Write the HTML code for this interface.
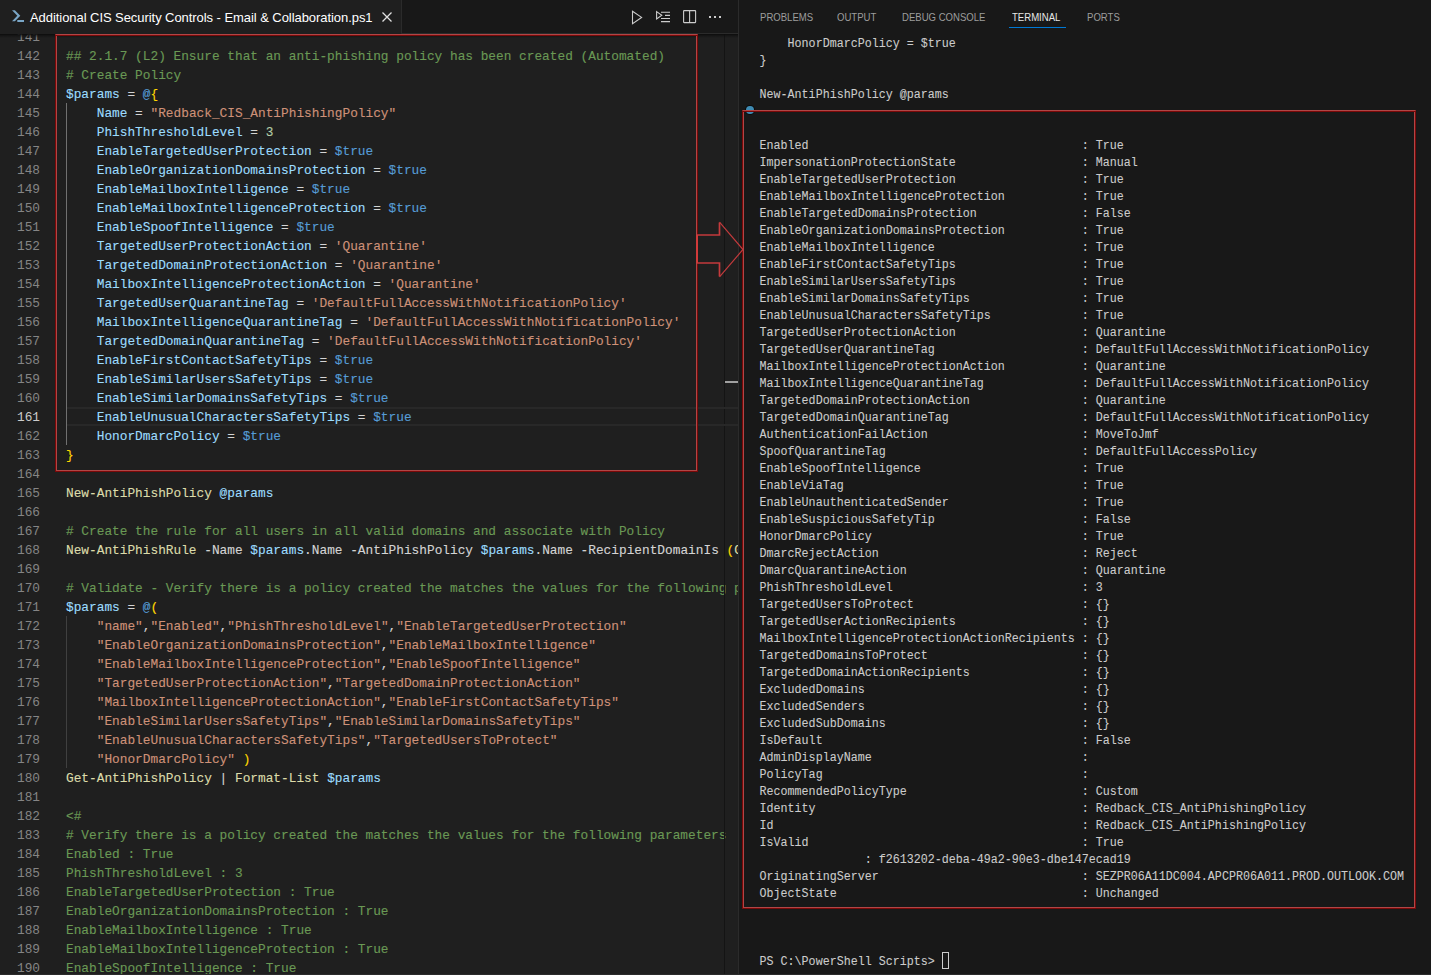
<!DOCTYPE html>
<html><head><meta charset="utf-8">
<style>
*{margin:0;padding:0;box-sizing:border-box}
html,body{width:1431px;height:975px;overflow:hidden;background:#1f1f1f}
body{position:relative;font-family:"Liberation Sans",sans-serif}
.abs{position:absolute}
#editor{position:absolute;left:0;top:0;width:738px;height:975px;background:#1f1f1f;overflow:hidden}
#tabs{position:absolute;left:0;top:0;width:739px;height:34px;background:#181818;z-index:5}
#tab{position:absolute;left:0;top:0;width:402px;height:34px;background:#1f1f1f;border-right:1px solid #2b2b2b}
#tabtitle{position:absolute;left:30px;top:9.7px;font-size:13px;letter-spacing:-0.06px;color:#ffffff;white-space:nowrap;line-height:16px}
#code{position:absolute;left:0;top:0;width:739px;height:975px;overflow:hidden}
.ln{position:absolute;left:0;width:40px;text-align:right;height:19px;line-height:19px;font-family:"Liberation Mono",monospace;font-size:12.800px;color:#858585}
.ln.act{color:#cccccc}
.cl{-webkit-text-stroke:0.12px currentColor;position:absolute;left:66.000px;height:19px;line-height:19px;font-family:"Liberation Mono",monospace;font-size:12.800px;white-space:pre;color:#d4d4d4}
.cm{color:#6a9955}.var{color:#9cdcfe}.op{color:#d4d4d4}.kw{color:#569cd6}.br{color:#ffd700}
.st{color:#ce9178}.num{color:#b5cea8}.fn{color:#dcdcaa}
#panel{position:absolute;left:738px;top:0;width:693px;height:975px;background:#181818;border-left:1px solid #2b2b2b}
.ptab{position:absolute;top:10px;font-size:11px;line-height:14px;color:#9d9d9d;white-space:nowrap;transform-origin:0 0;transform:scaleX(0.87)}
.tl{-webkit-text-stroke:0.08px currentColor;position:absolute;left:759.600px;height:17px;line-height:17px;font-family:"Liberation Mono",monospace;font-size:11.683px;white-space:pre;color:#cccccc;transform:scaleY(1.12);transform-origin:0 11.6px}
.redbox{position:absolute;border:1px solid #7a0808;border-top-color:#b04646;box-shadow:inset 0 1px 0 0 #7a0808,inset 1px 0 0 0 #b04646,inset -1px 0 0 0 #b04646,inset 0 -1px 0 0 #b04646}
</style></head><body>
<div id="editor">
  <div id="code">
<div class="ln" style="top:27.5px">141</div>
<div class="cl" style="top:27.5px"></div>
<div class="ln" style="top:46.5px">142</div>
<div class="cl" style="top:46.5px"><span class="cm">## 2.1.7 (L2) Ensure that an anti-phishing policy has been created (Automated)</span></div>
<div class="ln" style="top:65.5px">143</div>
<div class="cl" style="top:65.5px"><span class="cm"># Create Policy</span></div>
<div class="ln" style="top:84.5px">144</div>
<div class="cl" style="top:84.5px"><span class="var">$params</span><span class="op"> = </span><span class="kw">@</span><span class="br">{</span></div>
<div class="ln" style="top:103.5px">145</div>
<div class="cl" style="top:103.5px"><span class="op">    </span><span class="var">Name</span><span class="op"> = </span><span class="st">&quot;Redback_CIS_AntiPhishingPolicy&quot;</span></div>
<div class="ln" style="top:122.5px">146</div>
<div class="cl" style="top:122.5px"><span class="op">    </span><span class="var">PhishThresholdLevel</span><span class="op"> = </span><span class="num">3</span></div>
<div class="ln" style="top:141.5px">147</div>
<div class="cl" style="top:141.5px"><span class="op">    </span><span class="var">EnableTargetedUserProtection</span><span class="op"> = </span><span class="kw">$true</span></div>
<div class="ln" style="top:160.5px">148</div>
<div class="cl" style="top:160.5px"><span class="op">    </span><span class="var">EnableOrganizationDomainsProtection</span><span class="op"> = </span><span class="kw">$true</span></div>
<div class="ln" style="top:179.5px">149</div>
<div class="cl" style="top:179.5px"><span class="op">    </span><span class="var">EnableMailboxIntelligence</span><span class="op"> = </span><span class="kw">$true</span></div>
<div class="ln" style="top:198.5px">150</div>
<div class="cl" style="top:198.5px"><span class="op">    </span><span class="var">EnableMailboxIntelligenceProtection</span><span class="op"> = </span><span class="kw">$true</span></div>
<div class="ln" style="top:217.5px">151</div>
<div class="cl" style="top:217.5px"><span class="op">    </span><span class="var">EnableSpoofIntelligence</span><span class="op"> = </span><span class="kw">$true</span></div>
<div class="ln" style="top:236.5px">152</div>
<div class="cl" style="top:236.5px"><span class="op">    </span><span class="var">TargetedUserProtectionAction</span><span class="op"> = </span><span class="st">&#x27;Quarantine&#x27;</span></div>
<div class="ln" style="top:255.5px">153</div>
<div class="cl" style="top:255.5px"><span class="op">    </span><span class="var">TargetedDomainProtectionAction</span><span class="op"> = </span><span class="st">&#x27;Quarantine&#x27;</span></div>
<div class="ln" style="top:274.5px">154</div>
<div class="cl" style="top:274.5px"><span class="op">    </span><span class="var">MailboxIntelligenceProtectionAction</span><span class="op"> = </span><span class="st">&#x27;Quarantine&#x27;</span></div>
<div class="ln" style="top:293.5px">155</div>
<div class="cl" style="top:293.5px"><span class="op">    </span><span class="var">TargetedUserQuarantineTag</span><span class="op"> = </span><span class="st">&#x27;DefaultFullAccessWithNotificationPolicy&#x27;</span></div>
<div class="ln" style="top:312.5px">156</div>
<div class="cl" style="top:312.5px"><span class="op">    </span><span class="var">MailboxIntelligenceQuarantineTag</span><span class="op"> = </span><span class="st">&#x27;DefaultFullAccessWithNotificationPolicy&#x27;</span></div>
<div class="ln" style="top:331.5px">157</div>
<div class="cl" style="top:331.5px"><span class="op">    </span><span class="var">TargetedDomainQuarantineTag</span><span class="op"> = </span><span class="st">&#x27;DefaultFullAccessWithNotificationPolicy&#x27;</span></div>
<div class="ln" style="top:350.5px">158</div>
<div class="cl" style="top:350.5px"><span class="op">    </span><span class="var">EnableFirstContactSafetyTips</span><span class="op"> = </span><span class="kw">$true</span></div>
<div class="ln" style="top:369.5px">159</div>
<div class="cl" style="top:369.5px"><span class="op">    </span><span class="var">EnableSimilarUsersSafetyTips</span><span class="op"> = </span><span class="kw">$true</span></div>
<div class="ln" style="top:388.5px">160</div>
<div class="cl" style="top:388.5px"><span class="op">    </span><span class="var">EnableSimilarDomainsSafetyTips</span><span class="op"> = </span><span class="kw">$true</span></div>
<div class="ln act" style="top:407.5px">161</div>
<div class="cl" style="top:407.5px"><span class="op">    </span><span class="var">EnableUnusualCharactersSafetyTips</span><span class="op"> = </span><span class="kw">$true</span></div>
<div class="ln" style="top:426.5px">162</div>
<div class="cl" style="top:426.5px"><span class="op">    </span><span class="var">HonorDmarcPolicy</span><span class="op"> = </span><span class="kw">$true</span></div>
<div class="ln" style="top:445.5px">163</div>
<div class="cl" style="top:445.5px"><span class="br">}</span></div>
<div class="ln" style="top:464.5px">164</div>
<div class="cl" style="top:464.5px"></div>
<div class="ln" style="top:483.5px">165</div>
<div class="cl" style="top:483.5px"><span class="fn">New-AntiPhishPolicy</span><span class="op"> </span><span class="var">@params</span></div>
<div class="ln" style="top:502.5px">166</div>
<div class="cl" style="top:502.5px"></div>
<div class="ln" style="top:521.5px">167</div>
<div class="cl" style="top:521.5px"><span class="cm"># Create the rule for all users in all valid domains and associate with Policy</span></div>
<div class="ln" style="top:540.5px">168</div>
<div class="cl" style="top:540.5px"><span class="fn">New-AntiPhishRule</span><span class="op"> -Name </span><span class="var">$params</span><span class="op">.Name -AntiPhishPolicy </span><span class="var">$params</span><span class="op">.Name -RecipientDomainIs </span><span class="br">(</span><span class="fn">Get-AcceptedDomain</span><span class="br">)</span><span class="op">.Name</span></div>
<div class="ln" style="top:559.5px">169</div>
<div class="cl" style="top:559.5px"></div>
<div class="ln" style="top:578.5px">170</div>
<div class="cl" style="top:578.5px"><span class="cm"># Validate - Verify there is a policy created the matches the values for the following parameters</span></div>
<div class="ln" style="top:597.5px">171</div>
<div class="cl" style="top:597.5px"><span class="var">$params</span><span class="op"> = </span><span class="kw">@</span><span class="br">(</span></div>
<div class="ln" style="top:616.5px">172</div>
<div class="cl" style="top:616.5px"><span class="op">    </span><span class="st">&quot;name&quot;</span><span class="op">,</span><span class="st">&quot;Enabled&quot;</span><span class="op">,</span><span class="st">&quot;PhishThresholdLevel&quot;</span><span class="op">,</span><span class="st">&quot;EnableTargetedUserProtection&quot;</span></div>
<div class="ln" style="top:635.5px">173</div>
<div class="cl" style="top:635.5px"><span class="op">    </span><span class="st">&quot;EnableOrganizationDomainsProtection&quot;</span><span class="op">,</span><span class="st">&quot;EnableMailboxIntelligence&quot;</span></div>
<div class="ln" style="top:654.5px">174</div>
<div class="cl" style="top:654.5px"><span class="op">    </span><span class="st">&quot;EnableMailboxIntelligenceProtection&quot;</span><span class="op">,</span><span class="st">&quot;EnableSpoofIntelligence&quot;</span></div>
<div class="ln" style="top:673.5px">175</div>
<div class="cl" style="top:673.5px"><span class="op">    </span><span class="st">&quot;TargetedUserProtectionAction&quot;</span><span class="op">,</span><span class="st">&quot;TargetedDomainProtectionAction&quot;</span></div>
<div class="ln" style="top:692.5px">176</div>
<div class="cl" style="top:692.5px"><span class="op">    </span><span class="st">&quot;MailboxIntelligenceProtectionAction&quot;</span><span class="op">,</span><span class="st">&quot;EnableFirstContactSafetyTips&quot;</span></div>
<div class="ln" style="top:711.5px">177</div>
<div class="cl" style="top:711.5px"><span class="op">    </span><span class="st">&quot;EnableSimilarUsersSafetyTips&quot;</span><span class="op">,</span><span class="st">&quot;EnableSimilarDomainsSafetyTips&quot;</span></div>
<div class="ln" style="top:730.5px">178</div>
<div class="cl" style="top:730.5px"><span class="op">    </span><span class="st">&quot;EnableUnusualCharactersSafetyTips&quot;</span><span class="op">,</span><span class="st">&quot;TargetedUsersToProtect&quot;</span></div>
<div class="ln" style="top:749.5px">179</div>
<div class="cl" style="top:749.5px"><span class="op">    </span><span class="st">&quot;HonorDmarcPolicy&quot;</span><span class="op"> </span><span class="br">)</span></div>
<div class="ln" style="top:768.5px">180</div>
<div class="cl" style="top:768.5px"><span class="fn">Get-AntiPhishPolicy</span><span class="op"> | </span><span class="fn">Format-List</span><span class="op"> </span><span class="var">$params</span></div>
<div class="ln" style="top:787.5px">181</div>
<div class="cl" style="top:787.5px"></div>
<div class="ln" style="top:806.5px">182</div>
<div class="cl" style="top:806.5px"><span class="cm">&lt;#</span></div>
<div class="ln" style="top:825.5px">183</div>
<div class="cl" style="top:825.5px"><span class="cm"># Verify there is a policy created the matches the values for the following parameters</span></div>
<div class="ln" style="top:844.5px">184</div>
<div class="cl" style="top:844.5px"><span class="cm">Enabled : True</span></div>
<div class="ln" style="top:863.5px">185</div>
<div class="cl" style="top:863.5px"><span class="cm">PhishThresholdLevel : 3</span></div>
<div class="ln" style="top:882.5px">186</div>
<div class="cl" style="top:882.5px"><span class="cm">EnableTargetedUserProtection : True</span></div>
<div class="ln" style="top:901.5px">187</div>
<div class="cl" style="top:901.5px"><span class="cm">EnableOrganizationDomainsProtection : True</span></div>
<div class="ln" style="top:920.5px">188</div>
<div class="cl" style="top:920.5px"><span class="cm">EnableMailboxIntelligence : True</span></div>
<div class="ln" style="top:939.5px">189</div>
<div class="cl" style="top:939.5px"><span class="cm">EnableMailboxIntelligenceProtection : True</span></div>
<div class="ln" style="top:958.5px">190</div>
<div class="cl" style="top:958.5px"><span class="cm">EnableSpoofIntelligence : True</span></div>
  </div>
  <div id="tabs">
    <div class="abs" style="left:402px;top:33px;width:336px;height:1px;background:#2b2b2b"></div>
    <div id="tab">
      <svg class="abs" style="left:0;top:0" width="30" height="30" viewBox="0 0 30 30"><path d="M12 10.2 L14.9 10.2 L20.3 15.8 L14.9 21.2 L12 21.2 L17.3 15.8 Z" fill="#7aa6c6"/><rect x="17.3" y="20" width="6.7" height="2" fill="#7aa6c6"/></svg>
      <div id="tabtitle">Additional CIS Security Controls - Email &amp; Collaboration.ps1</div>
      <svg class="abs" style="left:382px;top:12px" width="10" height="10" viewBox="0 0 10 10"><path d="M0.5 0.5 L9.5 9.5 M9.5 0.5 L0.5 9.5" stroke="#e0e0e0" stroke-width="1.3"/></svg>
    </div>
  </div>
</div>
<div id="panel">
  <div class="ptab" style="left:21px">PROBLEMS</div>
  <div class="ptab" style="left:98px">OUTPUT</div>
  <div class="ptab" style="left:163px">DEBUG CONSOLE</div>
  <div class="ptab" style="left:273px;color:#e7e7e7">TERMINAL</div>
  <div class="abs" style="left:270px;top:27px;width:57px;height:1px;background:#0078d4"></div>
  <div class="ptab" style="left:348px">PORTS</div>
</div>
<div id="term">
<div class="tl" style="top:36.1px">    HonorDmarcPolicy = $true</div>
<div class="tl" style="top:53.1px">}</div>
<div class="tl" style="top:70.1px"></div>
<div class="tl" style="top:87.1px">New-AntiPhishPolicy @params</div>
<div class="tl" style="top:104.1px"></div>
<div class="tl" style="top:121.1px"></div>
<div class="tl" style="top:138.1px">Enabled                                       : True</div>
<div class="tl" style="top:155.1px">ImpersonationProtectionState                  : Manual</div>
<div class="tl" style="top:172.1px">EnableTargetedUserProtection                  : True</div>
<div class="tl" style="top:189.1px">EnableMailboxIntelligenceProtection           : True</div>
<div class="tl" style="top:206.1px">EnableTargetedDomainsProtection               : False</div>
<div class="tl" style="top:223.1px">EnableOrganizationDomainsProtection           : True</div>
<div class="tl" style="top:240.1px">EnableMailboxIntelligence                     : True</div>
<div class="tl" style="top:257.1px">EnableFirstContactSafetyTips                  : True</div>
<div class="tl" style="top:274.1px">EnableSimilarUsersSafetyTips                  : True</div>
<div class="tl" style="top:291.1px">EnableSimilarDomainsSafetyTips                : True</div>
<div class="tl" style="top:308.1px">EnableUnusualCharactersSafetyTips             : True</div>
<div class="tl" style="top:325.1px">TargetedUserProtectionAction                  : Quarantine</div>
<div class="tl" style="top:342.1px">TargetedUserQuarantineTag                     : DefaultFullAccessWithNotificationPolicy</div>
<div class="tl" style="top:359.1px">MailboxIntelligenceProtectionAction           : Quarantine</div>
<div class="tl" style="top:376.1px">MailboxIntelligenceQuarantineTag              : DefaultFullAccessWithNotificationPolicy</div>
<div class="tl" style="top:393.1px">TargetedDomainProtectionAction                : Quarantine</div>
<div class="tl" style="top:410.1px">TargetedDomainQuarantineTag                   : DefaultFullAccessWithNotificationPolicy</div>
<div class="tl" style="top:427.1px">AuthenticationFailAction                      : MoveToJmf</div>
<div class="tl" style="top:444.1px">SpoofQuarantineTag                            : DefaultFullAccessPolicy</div>
<div class="tl" style="top:461.1px">EnableSpoofIntelligence                       : True</div>
<div class="tl" style="top:478.1px">EnableViaTag                                  : True</div>
<div class="tl" style="top:495.1px">EnableUnauthenticatedSender                   : True</div>
<div class="tl" style="top:512.1px">EnableSuspiciousSafetyTip                     : False</div>
<div class="tl" style="top:529.1px">HonorDmarcPolicy                              : True</div>
<div class="tl" style="top:546.1px">DmarcRejectAction                             : Reject</div>
<div class="tl" style="top:563.1px">DmarcQuarantineAction                         : Quarantine</div>
<div class="tl" style="top:580.1px">PhishThresholdLevel                           : 3</div>
<div class="tl" style="top:597.1px">TargetedUsersToProtect                        : {}</div>
<div class="tl" style="top:614.1px">TargetedUserActionRecipients                  : {}</div>
<div class="tl" style="top:631.1px">MailboxIntelligenceProtectionActionRecipients : {}</div>
<div class="tl" style="top:648.1px">TargetedDomainsToProtect                      : {}</div>
<div class="tl" style="top:665.1px">TargetedDomainActionRecipients                : {}</div>
<div class="tl" style="top:682.1px">ExcludedDomains                               : {}</div>
<div class="tl" style="top:699.1px">ExcludedSenders                               : {}</div>
<div class="tl" style="top:716.1px">ExcludedSubDomains                            : {}</div>
<div class="tl" style="top:733.1px">IsDefault                                     : False</div>
<div class="tl" style="top:750.1px">AdminDisplayName                              : </div>
<div class="tl" style="top:767.1px">PolicyTag                                     : </div>
<div class="tl" style="top:784.1px">RecommendedPolicyType                         : Custom</div>
<div class="tl" style="top:801.1px">Identity                                      : Redback_CIS_AntiPhishingPolicy</div>
<div class="tl" style="top:818.1px">Id                                            : Redback_CIS_AntiPhishingPolicy</div>
<div class="tl" style="top:835.1px">IsValid                                       : True</div>
<div class="tl" style="top:852.1px">               : f2613202-deba-49a2-90e3-dbe147ecad19</div>
<div class="tl" style="top:869.1px">OriginatingServer                             : SEZPR06A11DC004.APCPR06A011.PROD.OUTLOOK.COM</div>
<div class="tl" style="top:886.1px">ObjectState                                   : Unchanged</div>
<div class="tl" style="top:903.1px"></div>
<div class="tl" style="top:920.1px"></div>
<div class="tl" style="top:937.1px"></div>
<div class="tl" style="top:954.1px">PS C:\PowerShell Scripts&gt; </div>
</div>

<svg class="abs" style="left:0;top:0;z-index:6" width="739" height="34" viewBox="0 0 739 34">
  <g fill="none" stroke="#cccccc" stroke-width="1.1">
    <path d="M632.5 11.2 L641.6 17.4 L632.5 23.6 Z"/>
    <path d="M656.6 11.6 L661.8 15.3 L656.6 19 Z"/>
    <path d="M661 12.2 H670 M665 15.4 H670 M661 18.5 H670 M661 21.6 H670"/>
    <rect x="683.6" y="10.6" width="12" height="12" rx="0.5"/>
    <path d="M689.6 10.6 V22.6"/>
  </g>
  <g fill="#cccccc"><rect x="709" y="16" width="2" height="2"/><rect x="714" y="16" width="2" height="2"/><rect x="719" y="16" width="2" height="2"/></g>
</svg>
<div class="abs" style="left:724px;top:34px;width:1px;height:941px;background:#141414"></div>
<div class="abs" style="left:725px;top:381px;width:13px;height:2px;background:#a0a0a0"></div>
<div class="abs" style="left:66px;top:102.5px;width:1px;height:342px;background:#707070"></div>
<div class="abs" style="left:66px;top:615.5px;width:1px;height:152px;background:#404040"></div>
<div class="abs" style="left:67px;top:406.5px;width:671px;height:19px;border-top:2px solid #282828;border-bottom:2px solid #282828"></div>
<div class="abs" style="left:941.5px;top:952px;width:7px;height:16.5px;border:1px solid #cccccc"></div>
<div class="abs" style="left:0;top:974px;width:1431px;height:1px;background:#2b2b2b"></div>
<div class="abs" style="left:0;top:34px;width:738px;height:4px;background:linear-gradient(#0c0c0c,rgba(12,12,12,0.5) 40%,rgba(31,31,31,0))"></div>
<svg class="abs" style="left:0;top:0;z-index:9" width="1431" height="975" viewBox="0 0 1431 975">
  <path d="M697 235 H719.5 V222.5 M719.5 276.5 V263 H697" fill="none" stroke="#c43a3c" stroke-width="1.7" stroke-linejoin="miter"/>
  <path d="M719.5 222.2 L743 249.5 L719.5 276.8" fill="none" stroke="#c43a3c" stroke-width="1.15"/>
  <rect x="696" y="235" width="2" height="28" fill="#d23a3a"/>
</svg>
<div class="abs" style="left:746.2px;top:106.2px;width:7.6px;height:7.6px;border-radius:50%;background:#3f8bb3;box-shadow:0 0 0 1px rgba(0,0,0,0.55)"></div>
<div class="redbox" style="left:55px;top:34px;width:643px;height:438px"></div>
<div class="redbox" style="left:742px;top:110px;width:674px;height:799px"></div>
</body></html>
